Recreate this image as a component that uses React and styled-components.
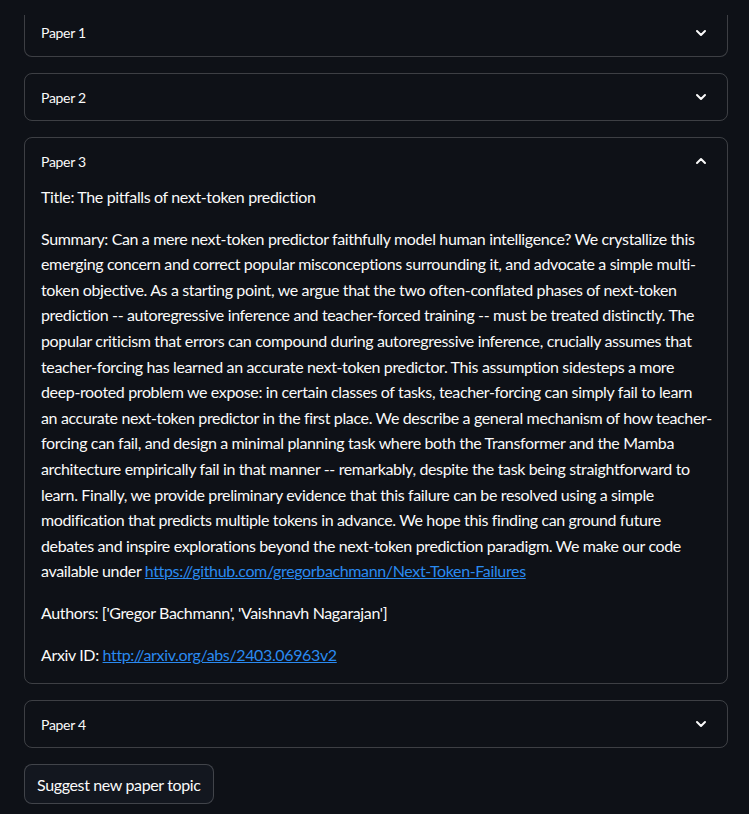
import React, { useState } from "react";
import styled, { createGlobalStyle } from "styled-components";

const GlobalStyle = createGlobalStyle`
  html, body { margin: 0; padding: 0; background: #0e1117; }
  body {
    font-family: Lato, "Noto Sans", sans-serif;
    color: #fafafa;
    -webkit-font-smoothing: antialiased;
  }
`;

const Page = styled.main`
  width: 704px;
  margin-left: 24px;
  padding-top: 15px;
  display: flex;
  flex-direction: column;
  gap: 16px;
  padding-bottom: 20px;
`;

const Card = styled.section`
  border: 1px solid rgba(250, 250, 250, 0.2);
  border-radius: 8px;
  ${(p) =>
    p.$clipped &&
    `border-top: none; border-top-left-radius: 0; border-top-right-radius: 0;`}
`;

const Header = styled.button`
  all: unset;
  box-sizing: border-box;
  width: 100%;
  display: flex;
  align-items: center;
  justify-content: space-between;
  padding: ${(p) => (p.$clipped ? "0 16px 6px" : "0 16px")};
  height: ${(p) => (p.$clipped ? "41px" : "46px")};
  cursor: pointer;
  font-family: Lato, "Noto Sans", sans-serif;
  font-size: 14px;
  letter-spacing: -0.3px;
  color: #fafafa;
`;

const Chevron = styled.svg`
  width: 20px;
  height: 20px;
  flex: none;
`;

const Body = styled.div`
  padding: 0 16px 16px;
  font-size: 16px;
  line-height: 25.6px;
  letter-spacing: -0.36px;
`;

const P = styled.p`
  margin: 0 0 16px;
  &:last-child { margin-bottom: 0; }
`;

const Line = styled.span`
  display: block;
  white-space: nowrap;
`;

const Link = styled.a`
  color: #2a8af0;
  text-decoration: underline;
`;

const Button = styled.button`
  align-self: flex-start;
  box-sizing: border-box;
  height: 40px;
  padding: 0 12px;
  border: 1px solid rgba(250, 250, 250, 0.2);
  border-radius: 8px;
  background: #13171f;
  color: #fafafa;
  font-family: Lato, "Noto Sans", sans-serif;
  font-size: 16px;
  letter-spacing: -0.36px;
  cursor: pointer;
`;

function ChevronIcon({ up }) {
  return (
    <Chevron viewBox="0 0 20 20" fill="none">
      <path
        d={up ? "M6 12 L10 8 L14 12" : "M6 8 L10 12 L14 8"}
        stroke="#fafafa"
        strokeWidth="2"
        strokeLinecap="round"
        strokeLinejoin="round"
      />
    </Chevron>
  );
}

function Expander({ label, open, clipped, onToggle, children }) {
  return (
    <Card $clipped={clipped}>
      <Header $clipped={clipped} onClick={onToggle}>
        <span>{label}</span>
        <ChevronIcon up={open} />
      </Header>
      {open && <Body>{children}</Body>}
    </Card>
  );
}

const summaryLines = [
  "Summary: Can a mere next-token predictor faithfully model human intelligence? We crystallize this",
  "emerging concern and correct popular misconceptions surrounding it, and advocate a simple multi-",
  "token objective. As a starting point, we argue that the two often-conflated phases of next-token",
  "prediction -- autoregressive inference and teacher-forced training -- must be treated distinctly. The",
  "popular criticism that errors can compound during autoregressive inference, crucially assumes that",
  "teacher-forcing has learned an accurate next-token predictor. This assumption sidesteps a more",
  "deep-rooted problem we expose: in certain classes of tasks, teacher-forcing can simply fail to learn",
  "an accurate next-token predictor in the first place. We describe a general mechanism of how teacher-",
  "forcing can fail, and design a minimal planning task where both the Transformer and the Mamba",
  "architecture empirically fail in that manner -- remarkably, despite the task being straightforward to",
  "learn. Finally, we provide preliminary evidence that this failure can be resolved using a simple",
  "modification that predicts multiple tokens in advance. We hope this finding can ground future",
  "debates and inspire explorations beyond the next-token prediction paradigm. We make our code",
];

export default function App() {
  const [open, setOpen] = useState(3);
  const toggle = (i) => setOpen(open === i ? null : i);
  return (
    <>
      <GlobalStyle />
      <Page>
        {[1, 2, 3, 4].map((i) => (
          <Expander
            key={i}
            label={`Paper ${i}`}
            open={open === i}
            clipped={i === 1}
            onToggle={() => toggle(i)}
          >
            {i === 3 && (
              <>
                <P>Title: The pitfalls of next-token prediction</P>
                <P>
                  {summaryLines.map((l, k) => (
                    <Line key={k}>{l}</Line>
                  ))}
                  <Line>
                    available under{" "}
                    <Link href="#">https://github.com/gregorbachmann/Next-Token-Failures</Link>
                  </Line>
                </P>
                <P>Authors: ['Gregor Bachmann', 'Vaishnavh Nagarajan']</P>
                <P>
                  Arxiv ID: <Link href="#">http://arxiv.org/abs/2403.06963v2</Link>
                </P>
              </>
            )}
          </Expander>
        ))}
        <Button>Suggest new paper topic</Button>
      </Page>
    </>
  );
}
